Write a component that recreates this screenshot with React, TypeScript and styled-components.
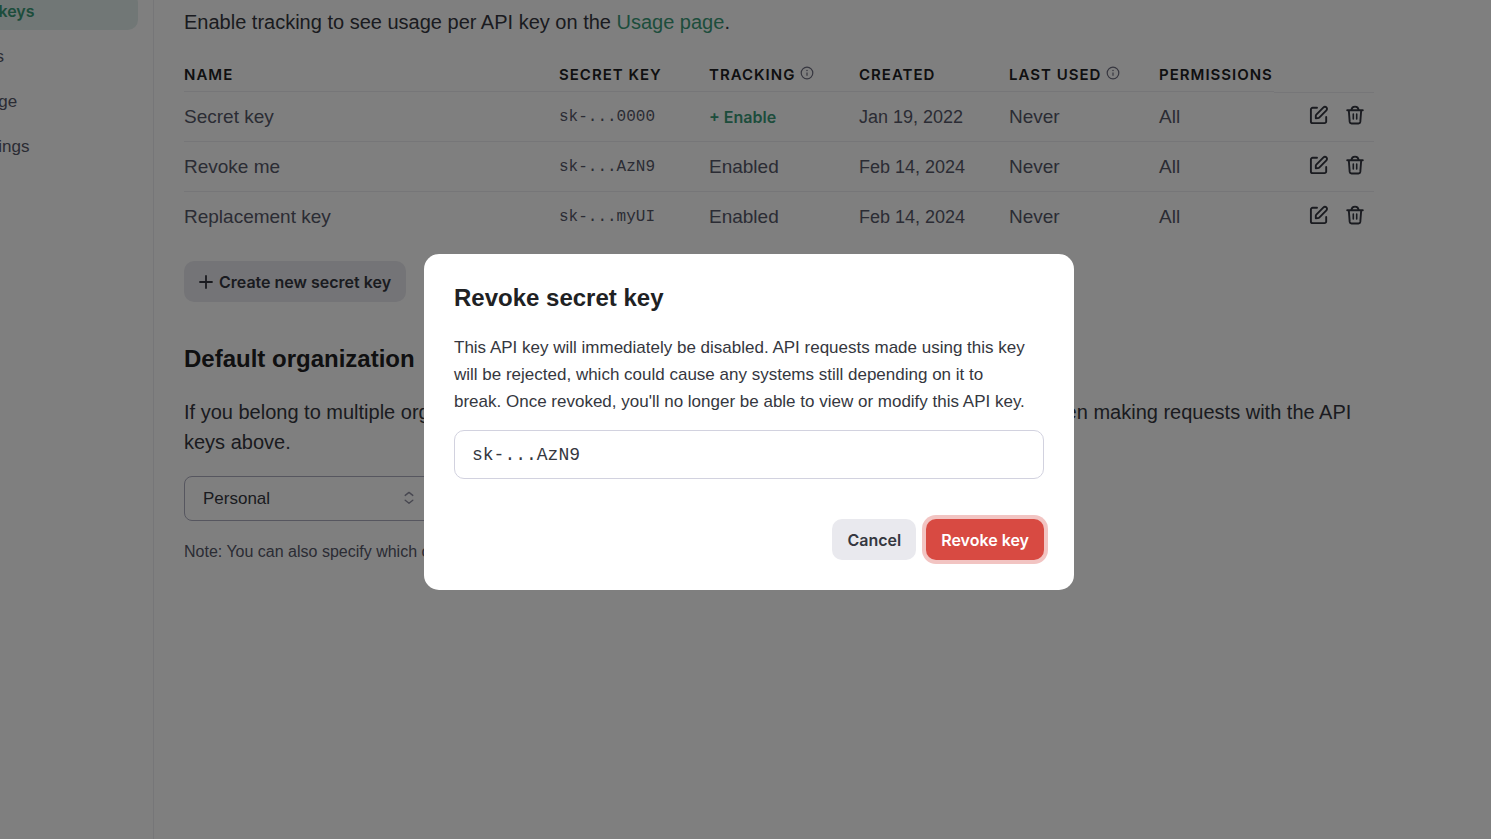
import React from "react";
import styled, { createGlobalStyle } from "styled-components";

const GlobalStyle = createGlobalStyle`
  *, *::before, *::after { box-sizing: border-box; }
  body {
    margin: 0;
    background: #ffffff;
    color: #353740;
    font-family: "Liberation Sans", Arial, sans-serif;
    font-size: 20px;
    line-height: 30px;
    overflow: hidden;
  }
  button, select, input { font: inherit; color: inherit; }
`;

const sans = `"Inter", "Liberation Sans", sans-serif`;
const mono = `"Liberation Mono", "Courier New", monospace`;

const Shell = styled.div`
  display: flex;
  min-height: 100vh;
`;

const Sidebar = styled.aside`
  flex: none;
  width: 154px;
  border-right: 1px solid #ececf1;
  overflow: hidden;
`;

const Nav = styled.nav`
  display: flex;
  flex-direction: column;
  gap: 8px;
  margin: -7px 15px 0 -80px;
`;

const NavLink = styled.a<{ $active?: boolean }>`
  height: 37px;
  padding-left: 48px;
  border-radius: 10px;
  font-family: ${(p) => (p.$active ? sans : "inherit")};
  font-size: ${(p) => (p.$active ? "16px" : "17px")};
  font-weight: ${(p) => (p.$active ? 600 : 400)};
  line-height: 37px;
  text-decoration: none;
  white-space: nowrap;
  color: ${(p) => (p.$active ? "#3b9a78" : "#565869")};
  background: ${(p) => (p.$active ? "#e3efed" : "transparent")};
`;

const Main = styled.main`
  flex: 1;
  min-width: 0;
  max-width: 1250px;
  padding: 7px 30px;
`;

const Paragraph = styled.p`
  margin: 0;
`;

const TextLink = styled.a`
  color: #3b9a78;
  text-decoration: none;
`;

const Table = styled.table`
  width: 100%;
  margin-top: 20px;
  border-collapse: separate;
  border-spacing: 0;
  table-layout: fixed;
`;

const HeadCell = styled.th<{ $width?: number; $plain?: boolean }>`
  width: ${(p) => (p.$width ? `${p.$width}px` : "auto")};
  height: 35px;
  padding: 2px 0 0;
  text-align: left;
  white-space: nowrap;
  font-family: ${sans};
  font-size: 15px;
  font-weight: 600;
  letter-spacing: 1px;
  color: #202123;
  border-bottom: ${(p) => (p.$plain ? "none" : "1px solid #ececf1")};

  svg { margin-left: 5px; color: #6e6e80; }
`;

const Row = styled.tr`
  &:not(:last-child) > td { border-bottom: 1px solid #ececf1; }
  &:first-child > td:last-child { border-top: 1px solid #ececf1; }
`;

const Cell = styled.td`
  height: 50px;
  padding: 0;
  font-size: 19px;
  color: #565869;
`;

const DateCell = styled(Cell)`
  font-size: 18px;
`;

const KeyCell = styled(Cell)`
  font-family: ${mono};
  font-size: 16px;
`;

const EnableButton = styled.button`
  padding: 0;
  border: 0;
  background: none;
  font-family: ${sans};
  font-size: 16px;
  font-weight: 600;
  color: #3b9a78;
`;

const Actions = styled.div`
  display: flex;
  justify-content: flex-end;
  gap: 17px;
  padding: 0 10px 4px 0;
`;

const IconButton = styled.button`
  display: flex;
  padding: 0;
  border: 0;
  background: none;
  color: #353740;
`;

const Button = styled.button<{ $danger?: boolean }>`
  display: inline-flex;
  align-items: center;
  gap: 6px;
  height: 41px;
  padding: 0 15px;
  border: 0;
  border-radius: 10px;
  font-family: ${sans};
  font-size: 16px;
  font-weight: 600;
  color: ${(p) => (p.$danger ? "#ffffff" : "#353740")};
  background: ${(p) => (p.$danger ? "#d84a42" : "#e9e9ee")};
  box-shadow: ${(p) => (p.$danger ? "0 0 0 4px #f2c4c2" : "none")};
  outline: none;
`;

const CreateButton = styled(Button)`
  display: flex;
  margin-top: 19px;
`;

const Heading = styled.h2`
  margin: 0;
  font-size: 24px;
  font-weight: 700;
  line-height: 32px;
  color: #202123;
`;

const Section = styled.section`
  padding-top: 41px;

  ${Paragraph} { margin-top: 22px; }
`;

const SelectBox = styled.div`
  position: relative;
  width: 250px;
  margin-top: 19px;

  svg {
    position: absolute;
    right: 19px;
    top: 15px;
    color: #8e8ea0;
    pointer-events: none;
  }
`;

const Select = styled.select`
  display: block;
  width: 100%;
  height: 45px;
  padding: 0 18px;
  border: 1px solid #acacbe;
  border-radius: 8px;
  background: transparent;
  appearance: none;
  font-size: 17px;
`;

const Note = styled.p`
  margin: 19px 0 0;
  font-size: 16px;
  line-height: 24px;
  color: #565869;
`;

const Backdrop = styled.div`
  position: fixed;
  inset: 0;
  display: flex;
  align-items: center;
  justify-content: center;
  background: rgba(0, 0, 0, 0.5);
`;

const Dialog = styled.div`
  width: 650px;
  margin: 5px 0 0 7px;
  padding: 28px 30px 30px;
  border-radius: 15px;
  background: #ffffff;
`;

const DialogText = styled.p`
  margin: 20px 0 15px;
  font-size: 17px;
  line-height: 27px;
`;

const KeyInput = styled.input`
  display: block;
  width: 100%;
  height: 49px;
  padding: 0 17px;
  border: 1px solid #d2d2df;
  border-radius: 10px;
  background: #ffffff;
  font-family: ${mono};
  font-size: 18px;
`;

const DialogActions = styled.div`
  display: flex;
  justify-content: flex-end;
  gap: 10px;
  margin-top: 40px;
`;

const InfoIcon = () => (
  <svg width="14" height="14" viewBox="0 0 14 14" fill="none" stroke="currentColor" strokeWidth="1.2" aria-hidden="true">
    <circle cx="7" cy="7" r="5.8" />
    <path d="M7 6.4v3.4" />
    <circle cx="7" cy="4.4" r=".75" fill="currentColor" stroke="none" />
  </svg>
);

const EditIcon = () => (
  <svg width="20" height="20" viewBox="0 0 20 20" fill="none" stroke="currentColor" strokeWidth="1.9" strokeLinecap="round" strokeLinejoin="round" aria-hidden="true">
    <path d="M8 2.800H3.600a1.700 1.700 0 0 0-1.700 1.700v11.900a1.700 1.700 0 0 0 1.700 1.700h11.900a1.700 1.700 0 0 0 1.700-1.700V12" />
    <path d="M6.800 13.200V10.800a1.600 1.600 0 0 1 .5-1.200l7.200-7.200a2.050 2.050 0 0 1 2.900 2.900l-7.200 7.300a1.600 1.600 0 0 1-1.200.5z" />
  </svg>
);

const TrashIcon = () => (
  <svg width="18" height="20" viewBox="0 0 18 20" fill="none" stroke="currentColor" strokeWidth="1.9" strokeLinecap="round" strokeLinejoin="round" aria-hidden="true">
    <path d="M1.200 5.200h15.600M2.800 5.200l.9 11.700a1.800 1.800 0 0 0 1.800 1.600h7a1.800 1.800 0 0 0 1.800-1.600l.9-11.700" />
    <path d="M5.400 5c.2-2 1.500-3.400 3.600-3.400S12.400 3 12.600 5" />
    <path d="M7.300 9v5M10.700 9v5" strokeWidth="1.600" />
  </svg>
);

const PlusIcon = () => (
  <svg width="14" height="14" viewBox="0 0 14 14" stroke="currentColor" strokeWidth="1.800" strokeLinecap="round" aria-hidden="true">
    <path d="M7 1v12M1 7h12" />
  </svg>
);

const SortIcon = () => (
  <svg width="12" height="14" viewBox="0 0 12 14" fill="none" stroke="currentColor" strokeWidth="1.400" strokeLinecap="round" strokeLinejoin="round" aria-hidden="true">
    <path d="M2.200 4.400L6 1.400l3.800 3M2.200 9.200L6 12.200l3.800-3" />
  </svg>
);

const keys = [
  { name: "Secret key", secret: "sk-...0000", tracked: false, created: "Jan 19, 2022" },
  { name: "Revoke me", secret: "sk-...AzN9", tracked: true, created: "Feb 14, 2024" },
  { name: "Replacement key", secret: "sk-...myUI", tracked: true, created: "Feb 14, 2024" },
];

export default function App() {
  return (
    <>
      <GlobalStyle />
      <Shell>
        <Sidebar>
          <Nav>
            <NavLink href="#api-keys" $active>API keys</NavLink>
            <NavLink href="#files">Files</NavLink>
            <NavLink href="#usage">Usage</NavLink>
            <NavLink href="#settings">Settings</NavLink>
          </Nav>
        </Sidebar>
        <Main>
          <Paragraph>
            Enable tracking to see usage per API key on the <TextLink href="#usage">Usage page</TextLink>.
          </Paragraph>
          <Table>
            <thead>
              <tr>
                <HeadCell>NAME</HeadCell>
                <HeadCell $width={150}>SECRET KEY</HeadCell>
                <HeadCell $width={150}>TRACKING<InfoIcon /></HeadCell>
                <HeadCell $width={150}>CREATED</HeadCell>
                <HeadCell $width={150}>LAST USED<InfoIcon /></HeadCell>
                <HeadCell $width={115}>PERMISSIONS</HeadCell>
                <HeadCell $width={100} $plain aria-label="Actions" />
              </tr>
            </thead>
            <tbody>
              {keys.map((k) => (
                <Row key={k.secret}>
                  <Cell>{k.name}</Cell>
                  <KeyCell>{k.secret}</KeyCell>
                  <Cell>{k.tracked ? "Enabled" : <EnableButton>+ Enable</EnableButton>}</Cell>
                  <DateCell>{k.created}</DateCell>
                  <Cell>Never</Cell>
                  <Cell>All</Cell>
                  <Cell>
                    <Actions>
                      <IconButton aria-label={`Edit ${k.name}`}><EditIcon /></IconButton>
                      <IconButton aria-label={`Revoke ${k.name}`}><TrashIcon /></IconButton>
                    </Actions>
                  </Cell>
                </Row>
              ))}
            </tbody>
          </Table>
          <CreateButton><PlusIcon />Create new secret key</CreateButton>
          <Section>
            <Heading>Default organization</Heading>
            <Paragraph>
              If you belong to multiple organizations, this setting controls which organization is used by default when making requests with the API keys above.
            </Paragraph>
            <SelectBox>
              <Select aria-label="Default organization" defaultValue="Personal">
                <option>Personal</option>
              </Select>
              <SortIcon />
            </SelectBox>
            <Note>Note: You can also specify which organization to use for each API request.</Note>
          </Section>
        </Main>
      </Shell>
      <Backdrop>
        <Dialog role="dialog" aria-modal="true" aria-labelledby="revoke-title">
          <Heading id="revoke-title">Revoke secret key</Heading>
          <DialogText>
            This API key will immediately be disabled. API requests made using this key
            <br />
            will be rejected, which could cause any systems still depending on it to
            <br />
            break. Once revoked, you'll no longer be able to view or modify this API key.
          </DialogText>
          <KeyInput aria-label="Secret key" readOnly value="sk-...AzN9" />
          <DialogActions>
            <Button>Cancel</Button>
            <Button $danger>Revoke key</Button>
          </DialogActions>
        </Dialog>
      </Backdrop>
    </>
  );
}
